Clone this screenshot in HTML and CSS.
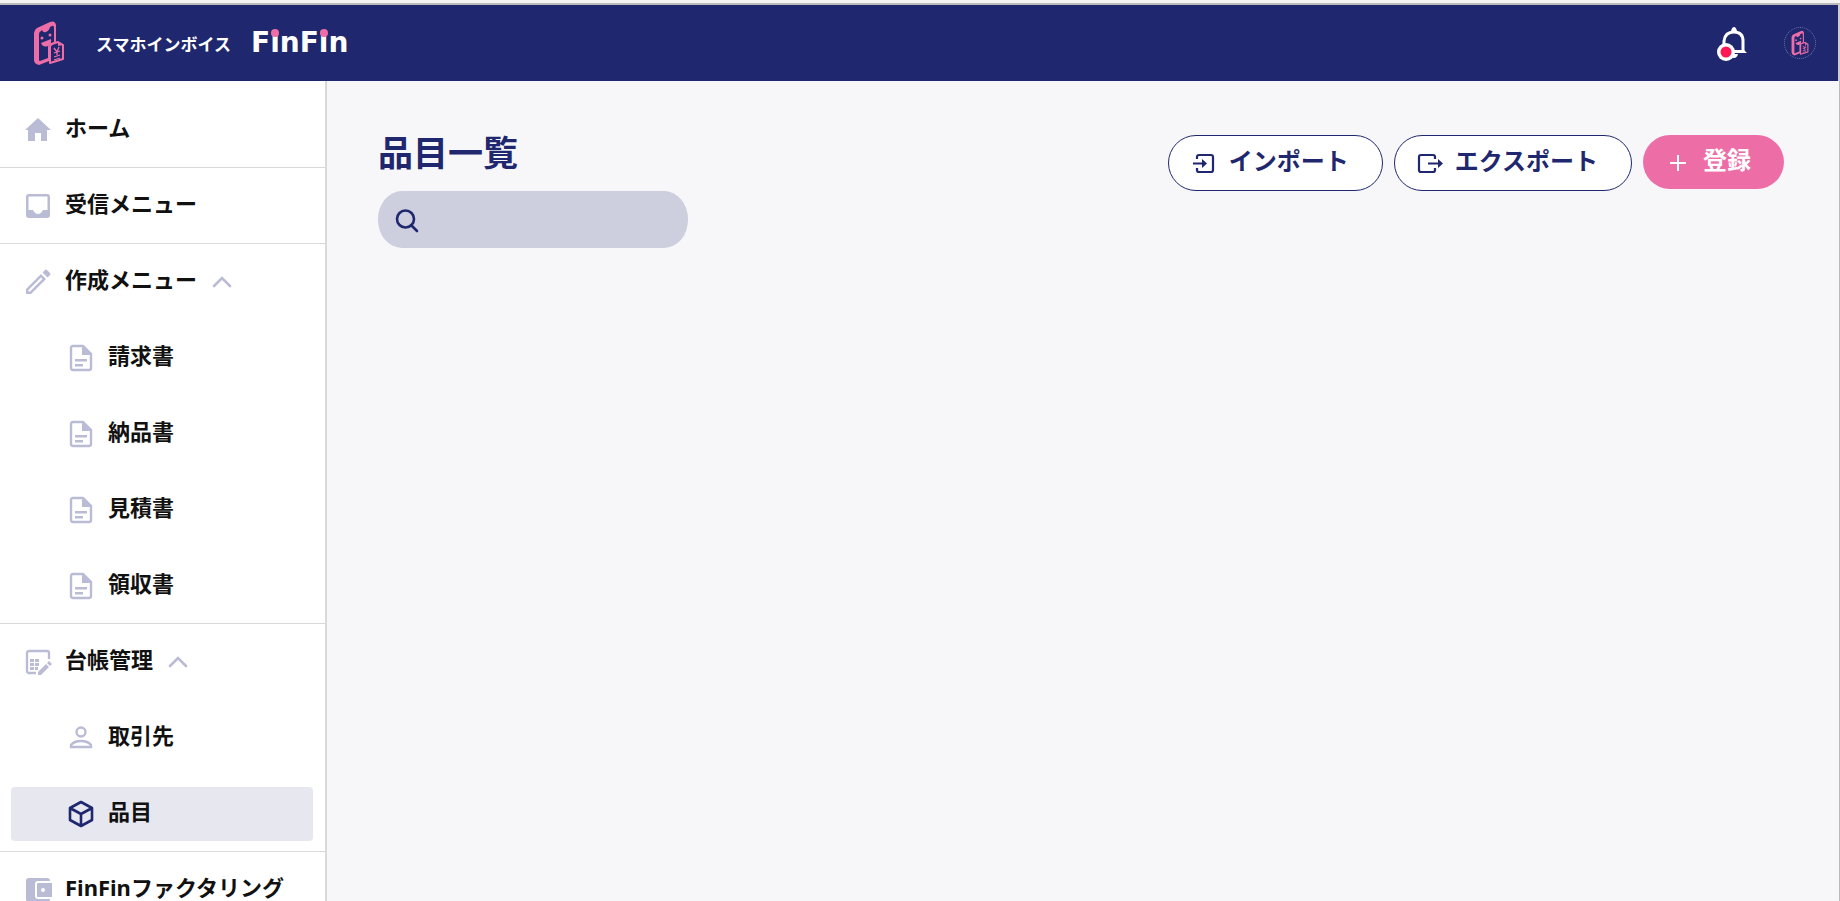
FILE: index.html
```html
<!DOCTYPE html>
<html lang="ja">
<head>
<meta charset="utf-8">
<meta name="viewport" content="width=device-width, initial-scale=1">
<title>品目一覧 | スマホインボイス FinFin</title>
<link rel="stylesheet" href="styles.css">
</head>
<body>
<svg class="defs" width="0" height="0" aria-hidden="true">
  <symbol id="mascot" viewBox="0 0 32 44">
    <path d="M1 12Q1 9 4 7L17 1Q22 -1 23 4V22L16 25V40L6 44Q1 43 1 39Z" fill="currentColor"/>
    <path d="M6 13Q6 11 8 10L9 9Q10 12 13 11Q16 10 17 6L19 5Q21 4 21 7V21L16 23Q15 24 15 26V37L7 40Q6 40 6 39Z" fill="#1f276e"/>
    <circle cx="9" cy="17" r="1.500" fill="currentColor"/><circle cx="17" cy="14" r="1.500" fill="currentColor"/>
    <path d="M8 22L18 18Q19 23 15 25Q10 27 8 22Z" fill="currentColor"/>
    <path d="M17 26Q17 24 19 23L25 21L30 24V38L17 42Z" fill="#1f276e" stroke="currentColor" stroke-width="2" stroke-linejoin="round"/>
    <path d="M25 21V25L30 24Z" fill="currentColor"/>
    <path d="M21 27L24 31L26 26M24 30V34M21 32L27 30M21 36L27 34M21 39L27 37" fill="none" stroke="currentColor" stroke-width="1.300"/>
  </symbol>
  <symbol id="doc" viewBox="0 0 28 28">
    <path d="M6 2H16L24 10V24Q24 26 22 26H6Q4 26 4 24V4Q4 2 6 2Z" fill="none" stroke="currentColor" stroke-width="2.400"/>
    <path d="M15 2L24 11H15ZM8 15H20V17.400H8ZM8 20H16V22.400H8Z" fill="currentColor"/>
  </symbol>
  <symbol id="chevron" viewBox="0 0 20 12">
    <path d="M2 10L10 2L18 10" fill="none" stroke="currentColor" stroke-width="2.600" stroke-linecap="round"/>
  </symbol>
</svg>

<header class="topbar">
  <a class="brand" href="#">
    <svg class="brand-mark" aria-hidden="true"><use href="#mascot"/></svg>
    <span class="brand-kana">スマホインボイス</span>
    <span class="brand-name">F<span class="dot-i">i</span>nF<span class="dot-i">i</span>n</span>
  </a>
  <div class="account">
    <button class="bell" type="button" aria-label="お知らせ">
      <svg viewBox="0 0 32 34" aria-hidden="true">
        <path d="M7 24V14Q8 5 17 5Q26 5 26 14V24" fill="none" stroke="#fff" stroke-width="3"/>
        <path d="M14 4Q15 0 17 0Q19 0 20 4ZM8 23H27L30 26H8ZM13 27H21Q20 31 17 31Q14 31 13 27Z" fill="#fff"/>
        <circle cx="9" cy="25" r="9" fill="#fff"/><circle cx="9" cy="25" r="5.500" fill="#ff1654"/>
      </svg>
    </button>
    <button class="avatar" type="button" aria-label="アカウント"><svg aria-hidden="true"><use href="#mascot"/></svg></button>
  </div>
</header>

<div class="shell">
  <nav class="sidebar" aria-label="メインメニュー">
    <div class="group">
      <a class="item" href="#"><svg class="icon" viewBox="0 0 28 28" aria-hidden="true"><path d="M14 2L27 14H23V25H17V17H11V25H4V14H1Z" fill="currentColor"/></svg><span>ホーム</span></a>
    </div>
    <div class="group">
      <a class="item" href="#"><svg class="icon" viewBox="0 0 28 28" aria-hidden="true"><path fill-rule="evenodd" d="M5 2H23Q26 2 26 5V23Q26 26 23 26H5Q2 26 2 23V5Q2 2 5 2ZM5 4.500Q4.500 4.500 4.500 5V18H9Q11 22 14 22Q17 22 19 18H23.500V5Q23.500 4.500 23 4.500Z" fill="currentColor"/></svg><span>受信メニュー</span></a>
    </div>
    <div class="group">
      <button class="item" type="button" aria-expanded="true"><svg class="icon" viewBox="0 0 28 28" aria-hidden="true"><path fill-rule="evenodd" d="M2 21L17 6L22 11L7 26H2ZM4.500 22V23.500H6L18.500 11L17 9.500ZM18.500 4.500L21 2Q22 1 23 2L26 5Q27 6 26 7L23.500 9.500Z" fill="currentColor"/></svg><span>作成メニュー</span><svg class="chevron" aria-hidden="true"><use href="#chevron"/></svg></button>
      <a class="item child" href="#"><svg class="icon" aria-hidden="true"><use href="#doc"/></svg><span>請求書</span></a>
      <a class="item child" href="#"><svg class="icon" aria-hidden="true"><use href="#doc"/></svg><span>納品書</span></a>
      <a class="item child" href="#"><svg class="icon" aria-hidden="true"><use href="#doc"/></svg><span>見積書</span></a>
      <a class="item child" href="#"><svg class="icon" aria-hidden="true"><use href="#doc"/></svg><span>領収書</span></a>
    </div>
    <div class="group">
      <button class="item" type="button" aria-expanded="true"><svg class="icon" viewBox="0 0 28 28" aria-hidden="true"><path d="M12 25H5Q3 25 3 23V5Q3 3 5 3H23Q25 3 25 5V11" fill="none" stroke="currentColor" stroke-width="2.300"/><path d="M6 11H10V14H6ZM11 11H15V14H11ZM6 15H10V18H6ZM11 15H15V18H11ZM6 19H10V22H6ZM11 19H14V22H11ZM14 24L22 16L25 19L17 27H14ZM23 15L25 13L28 16L26 18Z" fill="currentColor"/></svg><span>台帳管理</span><svg class="chevron" aria-hidden="true"><use href="#chevron"/></svg></button>
      <a class="item child" href="#"><svg class="icon" viewBox="0 0 28 28" aria-hidden="true"><g fill="none" stroke="currentColor" stroke-width="2.400"><circle cx="14" cy="8" r="4.500"/><path d="M4 23V21Q7 17 14 17Q21 17 24 21V23Z"/></g></svg><span>取引先</span></a>
      <a class="item child current" href="#" aria-current="page"><svg class="icon" viewBox="0 0 28 28" aria-hidden="true"><path d="M14 2L25 8V20L14 26L3 20V8ZM3 8L14 14L25 8M14 14V26" fill="none" stroke="currentColor" stroke-width="2.600" stroke-linejoin="round"/></svg><span>品目</span></a>
    </div>
    <div class="group">
      <a class="item" href="#"><svg class="icon" viewBox="0 0 28 28" aria-hidden="true"><path fill-rule="evenodd" d="M5 2H23Q26 2 26 5H14Q11 5 11 8V20Q11 23 14 23H26Q26 26 23 26H5Q2 26 2 23V5Q2 2 5 2Z M14 7H28V21H14Q13 21 13 20V8Q13 7 14 7ZM19 12A2 2 0 1 0 19 16A2 2 0 1 0 19 12Z" fill="currentColor"/></svg><span>FinFinファクタリング</span></a>
    </div>
  </nav>

  <main class="content">
    <div class="heading">
      <h1>品目一覧</h1>
      <label class="search">
        <svg viewBox="0 0 24 24" aria-hidden="true"><path d="M16 17L22 23M19 11A8.500 8.500 0 1 1 2 11A8.500 8.500 0 1 1 19 11Z" fill="none" stroke="currentColor" stroke-width="2.600" stroke-linecap="round"/></svg>
        <input type="search" aria-label="品目を検索">
      </label>
    </div>
    <div class="actions">
      <button class="button" type="button"><svg viewBox="0 0 24 24" aria-hidden="true"><path d="M5 8V6Q5 4 7 4H19Q21 4 21 6V19Q21 21 19 21H7Q5 21 5 19V17M1 12.500H12" fill="none" stroke="currentColor" stroke-width="2.200"/><path d="M10 8L15 12.500L10 17Z" fill="currentColor"/></svg><span>インポート</span></button>
      <button class="button" type="button"><svg viewBox="0 0 24 24" aria-hidden="true"><path d="M17 8V6Q17 4 15 4H3Q1 4 1 6V19Q1 21 3 21H15Q17 21 17 19V17M10 12.500H21" fill="none" stroke="currentColor" stroke-width="2.200"/><path d="M20 8L25 12.500L20 17Z" fill="currentColor"/></svg><span>エクスポート</span></button>
      <button class="button primary" type="button"><svg viewBox="0 0 24 24" aria-hidden="true"><path d="M12 5V21M4 13H20" stroke="currentColor" stroke-width="2"/></svg><span>登録</span></button>
    </div>
  </main>
</div>
</body>
</html>
```

FILE: styles.css
```css
* { box-sizing: border-box; }

html, body { height: 100%; }

body {
  display: flex;
  flex-direction: column;
  margin: 0;
  overflow: hidden;
  border-top: 3px solid #f4f4f4;
  background: #f7f7fa;
  color: #111;
  font-family: "Noto Sans", "Noto Sans CJK JP", sans-serif;
  font-size: 22px;
  font-weight: 700;
}

a { color: inherit; text-decoration: none; }

button {
  border: 0;
  background: none;
  color: inherit;
  font: inherit;
  cursor: pointer;
}

svg { display: block; flex: none; overflow: visible; }

.defs { position: absolute; }

.topbar {
  display: flex;
  flex: none;
  align-items: center;
  justify-content: space-between;
  height: 78px;
  padding: 0 22px 0 33px;
  border-top: 2px solid #bbb;
  border-right: 2px solid #ccc;
  background: #1f276e;
  color: #fff;
}

.brand { display: flex; align-items: center; }

.brand-mark { width: 32px; height: 44px; color: #ed6ea7; }

.brand-kana { margin-left: 31px; font-size: 17px; }

.brand-name {
  margin-left: 20px;
  font-family: "DejaVu Sans", sans-serif;
  font-size: 28px;
  line-height: 40px;
}

.dot-i { position: relative; }

.dot-i::before {
  content: "";
  position: absolute;
  top: 3px;
  left: 50%;
  width: 8px;
  height: 8px;
  margin-left: -4px;
  border-radius: 50%;
  background: #ed6ea7;
}

.account { display: flex; align-items: center; gap: 35px; }

.bell { padding: 2px 0 0; }

.bell svg { width: 32px; height: 34px; }

.avatar {
  display: grid;
  place-items: center;
  width: 32px;
  height: 32px;
  padding: 0;
  border: 1px dotted #7379a6;
  border-radius: 50%;
  color: #ed6ea7;
}

.avatar svg { width: 18px; height: 26px; }

.shell { display: flex; flex: 1; min-height: 0; border-right: 1px solid #bbb; }

.sidebar {
  flex: none;
  width: 327px;
  padding-top: 11px;
  overflow: hidden;
  border-right: 2px solid #d9d9dc;
  background: #fff;
}

.group {
  display: flex;
  flex-direction: column;
  gap: 22px;
  padding: 11px 12px 10px 11px;
  border-bottom: 1px solid #d9d9dc;
}

.item {
  display: flex;
  align-items: center;
  gap: 13px;
  height: 54px;
  padding: 0 0 0 13px;
  border-radius: 4px;
  white-space: nowrap;
}

.item span { padding-bottom: 6px; line-height: 32px; }

.child { padding-left: 56px; }

.icon { width: 28px; height: 28px; color: #babcd6; }

.chevron { width: 20px; height: 12px; margin-left: 2px; color: #babcd6; }

.current { background: #e7e7f0; }

.current .icon { color: #1f276e; }

.content {
  display: flex;
  flex: 1;
  align-items: flex-start;
  justify-content: space-between;
  padding: 46px 55px 0 51px;
  color: #1f276e;
}

h1 { margin: 0; font-size: 35px; line-height: 52px; }

.search {
  display: flex;
  align-items: center;
  gap: 12px;
  width: 310px;
  height: 57px;
  margin-top: 12px;
  padding: 0 17px;
  border-radius: 24px / 28px;
  background: #cdcede;
}

.search svg { width: 24px; height: 24px; }

.search input {
  flex: 1;
  min-width: 0;
  border: 0;
  outline: 0;
  background: none;
  color: inherit;
  font: inherit;
}

.actions { display: flex; align-items: flex-start; gap: 11px; padding-top: 8px; }

.button {
  display: flex;
  align-items: center;
  gap: 13px;
  height: 56px;
  padding: 0 33px 0 23px;
  border: 1px solid #1f276e;
  border-radius: 28px;
  background: #fff;
  font-size: 24px;
}

.button svg { width: 24px; height: 24px; }

.button span { padding-bottom: 4px; line-height: 32px; }

.primary {
  height: 54px;
  border: 0;
  background: #ed6ea7;
  color: #fff;
}
```
